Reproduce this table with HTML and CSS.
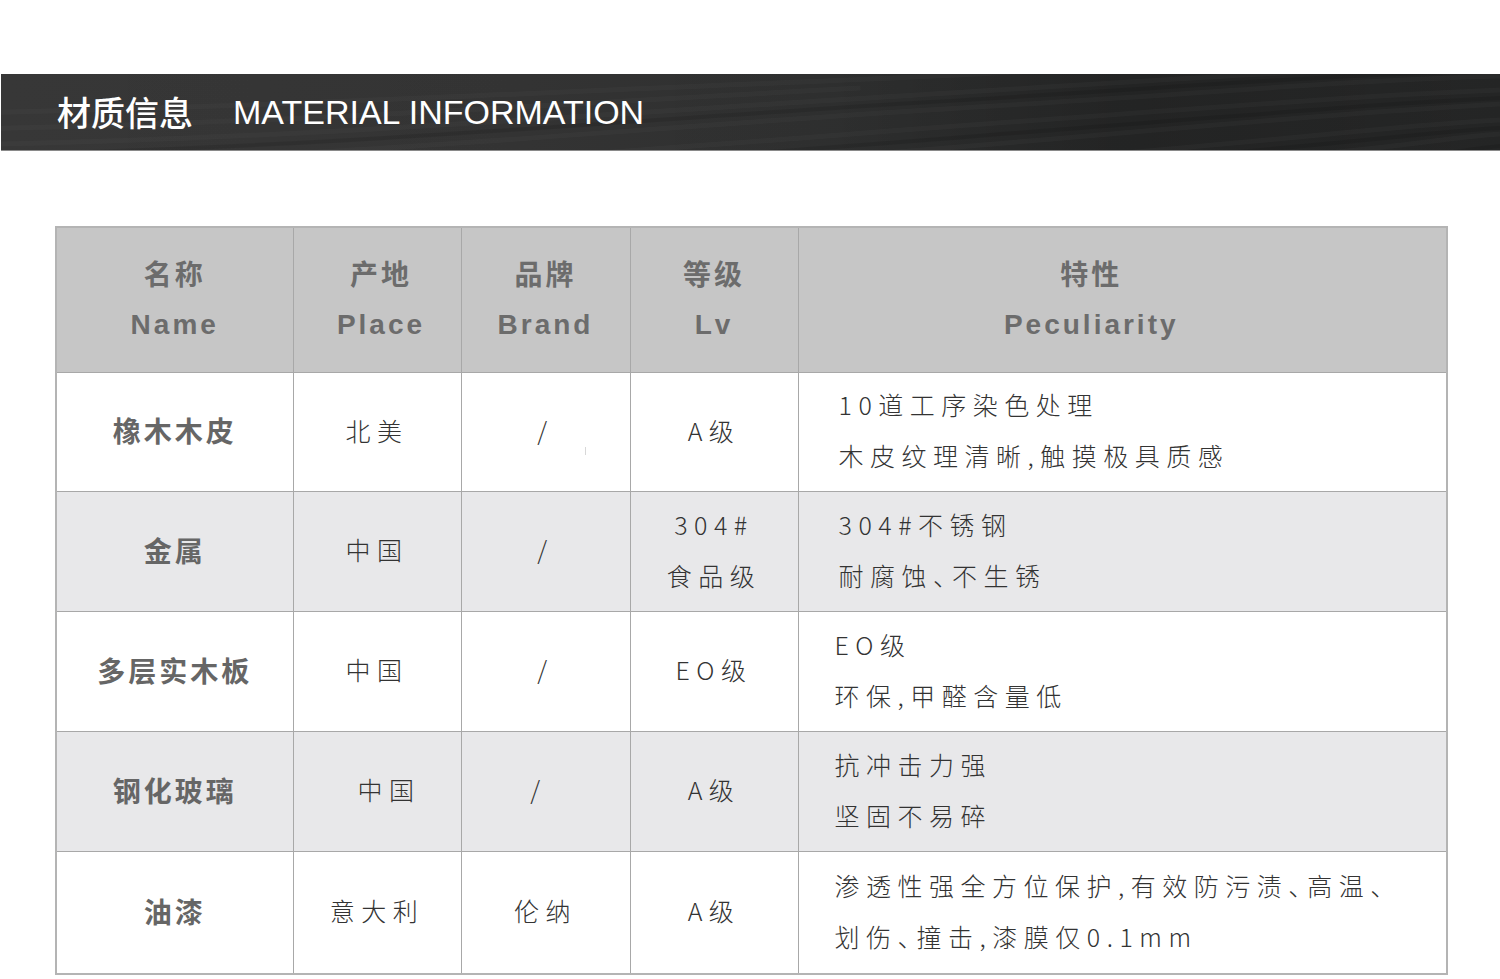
FILE: index.html
```html
<!DOCTYPE html>
<html lang="zh-CN">
<head>
<meta charset="utf-8">
<title>材质信息 MATERIAL INFORMATION</title>
<link rel="stylesheet" href="styles.css">
</head>
<body>
<div class="banner">
  <svg class="banner-waves" viewBox="0 0 1500 76" preserveAspectRatio="none" aria-hidden="true">
    <defs>
      <linearGradient id="shade" x1="0" y1="0" x2="1" y2="0">
        <stop offset="0" stop-color="#000" stop-opacity="0"/>
        <stop offset="0.55" stop-color="#000" stop-opacity="0.06"/>
        <stop offset="0.75" stop-color="#000" stop-opacity="0.24"/>
        <stop offset="1" stop-color="#000" stop-opacity="0.16"/>
      </linearGradient>
    </defs>
    <rect x="0" y="0" width="1500" height="76" fill="url(#shade)"/>
    <g fill="none" stroke="#ffffff" stroke-opacity="0.025" stroke-width="5">
      <path d="M0 70 C300 64 600 40 900 22 S1300 -4 1500 -10"/>
      <path d="M60 90 C380 80 660 52 960 34 S1320 8 1500 2"/>
      <path d="M200 100 C480 92 760 66 1040 46 S1360 22 1500 16"/>
      <path d="M380 110 C640 100 880 80 1110 60 S1400 36 1500 30"/>
      <path d="M560 116 C780 106 980 92 1180 74 S1420 50 1500 46"/>
      <path d="M720 120 C900 112 1080 100 1250 86 S1440 64 1500 60"/>
      <path d="M-100 40 C200 36 500 20 800 8 S1200 -14 1500 -24"/>
      <path d="M-100 56 C240 52 560 30 860 14"/>
    </g>
    <g fill="none" stroke="#000000" stroke-opacity="0.1" stroke-width="4">
      <path d="M20 80 C340 72 630 46 930 28 S1310 2 1500 -4"/>
      <path d="M290 106 C560 96 820 74 1080 54 S1380 30 1500 24"/>
      <path d="M640 118 C840 110 1030 96 1215 80 S1430 58 1500 54"/>
      <path d="M900 124 C1060 116 1200 106 1320 94 S1460 76 1500 72"/>
    </g>
  </svg>
  <h1 class="banner-title"><span class="banner-zh">材质信息</span><span class="banner-en">MATERIAL INFORMATION</span></h1>
</div>

<table class="spec">
  <colgroup>
    <col class="col-name">
    <col class="col-place">
    <col class="col-brand">
    <col class="col-lv">
    <col class="col-desc">
  </colgroup>
  <thead>
    <tr>
      <th><span class="th-line">名称</span><span class="th-line th-en">Name</span></th>
      <th class="th-place"><span class="th-line">产地</span><span class="th-line th-en">Place</span></th>
      <th><span class="th-line">品牌</span><span class="th-line th-en">Brand</span></th>
      <th><span class="th-line">等级</span><span class="th-line th-en">Lv</span></th>
      <th class="th-desc"><span class="th-line">特性</span><span class="th-line th-en">Peculiarity</span></th>
    </tr>
  </thead>
  <tbody>
    <tr class="first">
      <td class="name">橡木木皮</td>
      <td class="plain">北美</td>
      <td class="plain slash">/<span class="tick"></span></td>
      <td class="plain">A级</td>
      <td class="plain desc"><span class="line">10道工序染色处理</span><span class="line">木皮纹理清晰,触摸极具质感</span></td>
    </tr>
    <tr class="alt">
      <td class="name">金属</td>
      <td class="plain">中国</td>
      <td class="plain slash">/</td>
      <td class="plain"><span class="line">304#</span><span class="line">食品级</span></td>
      <td class="plain desc"><span class="line">304#不锈钢</span><span class="line">耐腐蚀<span class="pn">、</span>不生锈</span></td>
    </tr>
    <tr>
      <td class="name">多层实木板</td>
      <td class="plain">中国</td>
      <td class="plain slash">/</td>
      <td class="plain">EO级</td>
      <td class="plain desc desc-tight"><span class="line">EO级</span><span class="line">环保,甲醛含量低</span></td>
    </tr>
    <tr class="alt">
      <td class="name">钢化玻璃</td>
      <td class="plain shift">中国</td>
      <td class="plain slash slash-left">/</td>
      <td class="plain">A级</td>
      <td class="plain desc desc-tight"><span class="line">抗冲击力强</span><span class="line">坚固不易碎</span></td>
    </tr>
    <tr class="last">
      <td class="name">油漆</td>
      <td class="plain">意大利</td>
      <td class="plain">伦纳</td>
      <td class="plain">A级</td>
      <td class="plain desc desc-tight"><span class="line">渗透性强全方位保护,有效防污渍<span class="pn">、</span>高温<span class="pn">、</span></span><span class="line">划伤<span class="pn">、</span>撞击,漆膜仅0.1mm</span></td>
    </tr>
  </tbody>
</table>
</body>
</html>
```

FILE: styles.css
```css
html, body {
  margin: 0;
  padding: 0;
  background: #ffffff;
}

body {
  font-family: "Liberation Sans", "Noto Sans CJK SC", sans-serif;
  width: 1500px;
  height: 979px;
  overflow: hidden;
}

/* ---------- banner ---------- */
.banner {
  position: relative;
  margin: 74px 0 0 1px;
  height: 76px;
  border-bottom: 1px solid #8a8a8a;
  background: linear-gradient(90deg, #373737 0%, #353535 35%, #303131 60%, #2b2c2c 100%);
  overflow: hidden;
  display: flex;
  align-items: center;
  padding-left: 56px;
}

.banner-waves {
  position: absolute;
  left: 0;
  top: 0;
  width: 100%;
  height: 100%;
}

.banner-title {
  position: relative;
  margin: 0;
  display: flex;
  align-items: center;
  color: #ffffff;
  font-weight: normal;
}

.banner-zh {
  font-family: "Noto Sans CJK SC", sans-serif;
  font-size: 34px;
  font-weight: 500;
  line-height: 40px;
}

.banner-en {
  margin-left: 40px;
  font-family: "Liberation Sans", sans-serif;
  font-size: 34px;
  letter-spacing: 0;
  line-height: 40px;
}

/* ---------- table ---------- */
.spec {
  margin: 75px 0 0 55px;
  border-collapse: collapse;
  table-layout: fixed;
  width: 1391px;
  border: 2px solid #b4b4b4;
}

.col-name { width: 237px; }
.col-place { width: 168px; }
.col-brand { width: 169px; }
.col-lv { width: 168px; }
.col-desc { width: 649px; }

.spec th,
.spec td {
  border: 1px solid #a8a8a8;
  padding: 0;
  text-align: center;
  vertical-align: middle;
}

.spec th {
  height: 144px;
  background: #c6c6c6;
  color: #6c6c6c;
  font-family: "Liberation Sans", "Noto Sans CJK SC", sans-serif;
  font-weight: bold;
  font-size: 28px;
  letter-spacing: 3px;
}

.th-line {
  display: block;
  line-height: 52px;
}

.th-en {
  margin-top: -3px;
}

.spec th.th-place {
  padding-left: 8px;
}

.spec th.th-desc {
  padding-right: 62px;
}

.spec td {
  height: 115px;
  padding-bottom: 4px;
  background: #ffffff;
}

.spec tr.first td {
  height: 114px;
}

.spec tr.alt td {
  background: #e8e8ea;
}

.spec tr.last td {
  height: 117px;
}

.name {
  font-family: "Noto Sans CJK SC", sans-serif;
  font-weight: bold;
  font-size: 28px;
  color: #666666;
  letter-spacing: 3px;
}

.plain {
  font-family: "Noto Sans CJK SC", sans-serif;
  font-weight: 300;
  font-size: 25px;
  color: #333333;
  letter-spacing: 6.5px;
  line-height: 51px;
}

.line {
  display: block;
}

.pn {
  letter-spacing: -6px;
}

.spec td.desc {
  text-align: left;
  padding-left: 40px;
}

.spec td.desc-tight {
  padding-left: 36px;
}

.spec td.shift {
  padding-left: 24px;
}

.slash {
  position: relative;
}

.spec td.slash-left {
  padding-right: 14px;
}

.tick {
  position: absolute;
  left: 123px;
  top: 74px;
  width: 1px;
  height: 8px;
  background: #d8d8d8;
}
```
